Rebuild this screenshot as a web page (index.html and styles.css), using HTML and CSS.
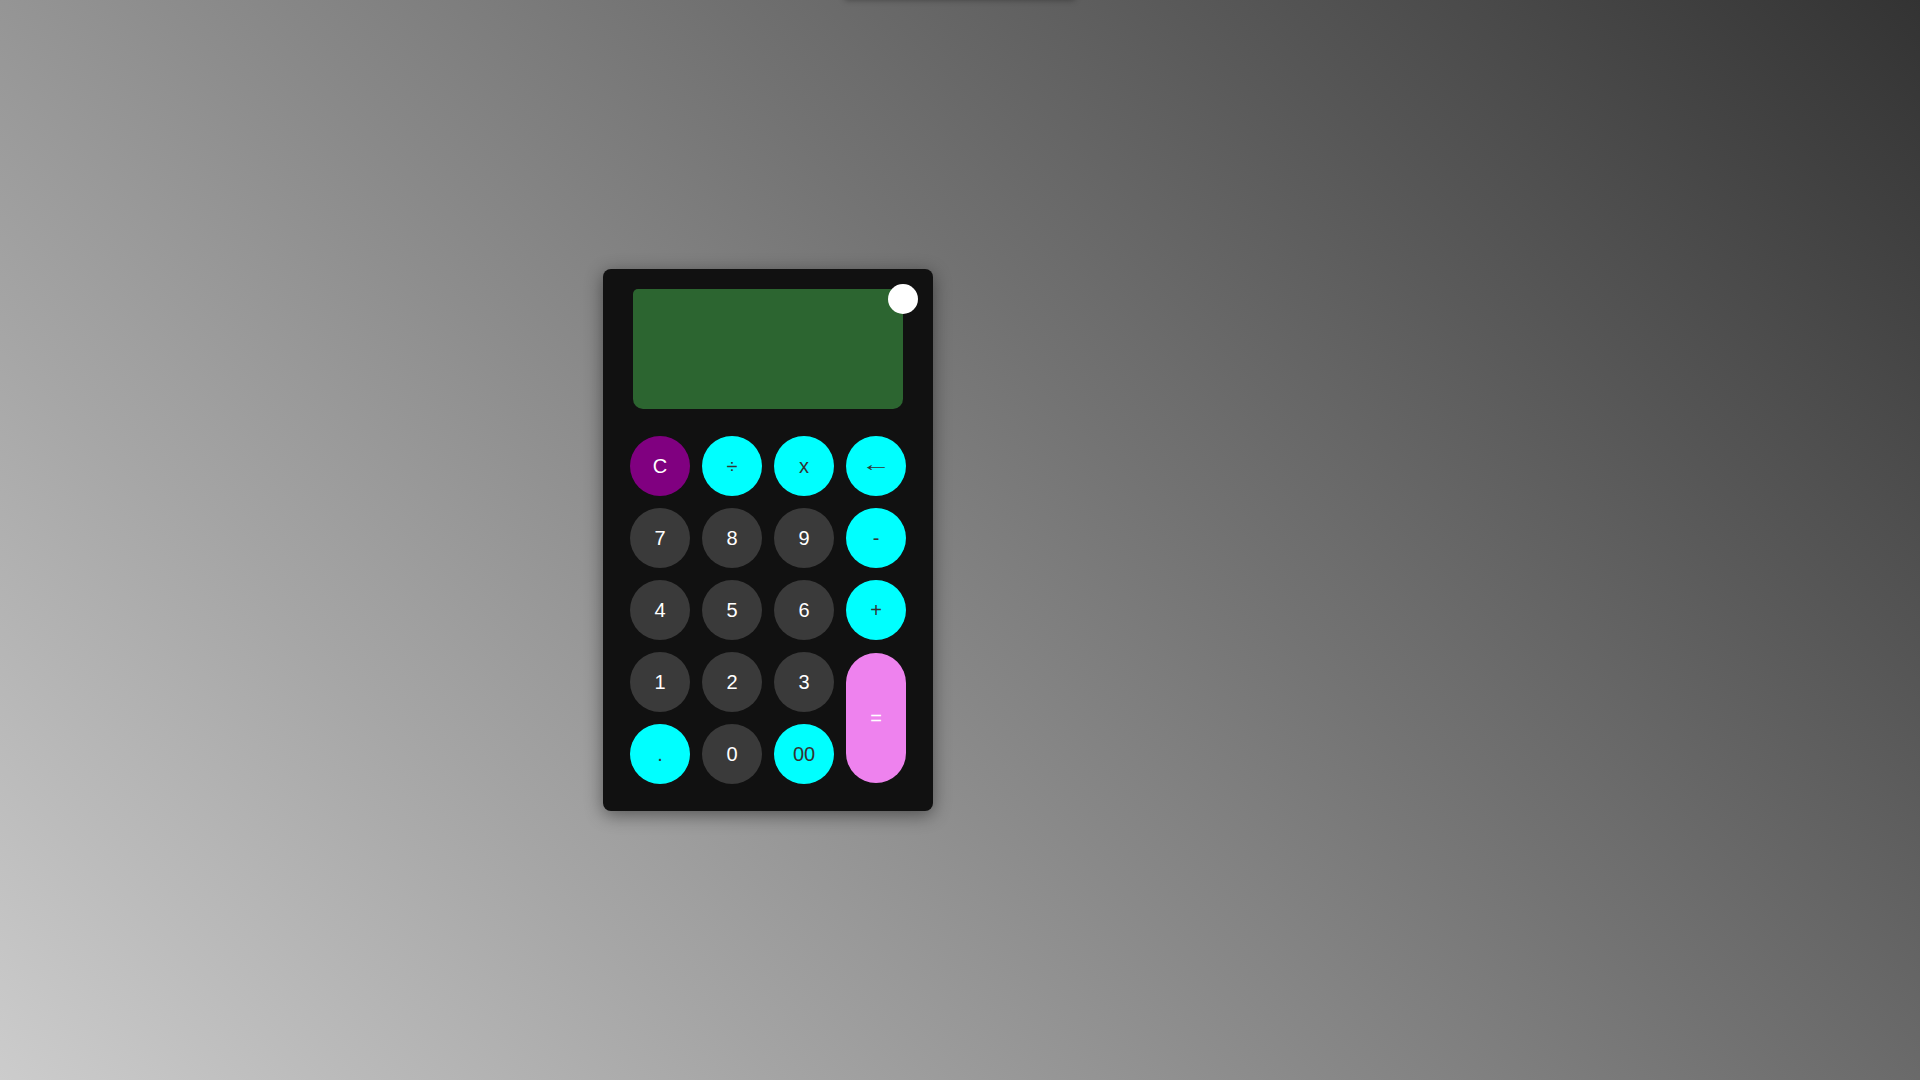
FILE: index.html
```html
<!DOCTYPE html>
<html lang="en">
<head>
<meta charset="UTF-8">
<title>Calculator</title>
<link rel="stylesheet" href="styles.css">
</head>
<body>
<div class="history-tab"></div>
<div class="calculator">
  <div class="display-wrap">
    <div class="display"></div>
    <span class="power"></span>
  </div>
  <div class="keys">
    <button class="key clear">C</button>
    <button class="key op">÷</button>
    <button class="key op">x</button>
    <button class="key op"><span class="arrow">←</span></button>
    <button class="key num">7</button>
    <button class="key num">8</button>
    <button class="key num">9</button>
    <button class="key op">-</button>
    <button class="key num">4</button>
    <button class="key num">5</button>
    <button class="key num">6</button>
    <button class="key op">+</button>
    <button class="key num">1</button>
    <button class="key num">2</button>
    <button class="key num">3</button>
    <button class="key equals">=</button>
    <button class="key op">.</button>
    <button class="key num">0</button>
    <button class="key op">00</button>
  </div>
</div>
</body>
</html>
```
FILE: styles.css
```css
* { box-sizing: border-box; }
html, body { margin: 0; height: 100%; }
body {
  min-height: 100vh;
  background: linear-gradient(45deg, #cccccc, #333333);
  display: flex;
  align-items: center;
  justify-content: center;
  font-family: "Liberation Sans", Arial, sans-serif;
  overflow: hidden;
  position: relative;
}
.history-tab {
  position: absolute;
  top: -40px;
  left: 50%;
  width: 230px;
  height: 40px;
  transform: translateX(-50%);
  box-shadow: 0 0 6px rgba(0,0,0,0.35);
}
.calculator {
  width: 330px;
  height: 542px;
  background: #111111;
  border-radius: 8px;
  padding: 20px 27px 27px;
  margin-right: 384px;
  box-shadow: 0 4px 18px rgba(0,0,0,0.45);
  display: flex;
  flex-direction: column;
}
.display-wrap {
  position: relative;
  margin: 0 3px 27px;
}
.display {
  height: 120px;
  background: #2c6530;
  border-radius: 5px 5px 10px 10px;
}
.power {
  position: absolute;
  top: -5px;
  right: -15px;
  width: 30px;
  height: 30px;
  border-radius: 50%;
  background: #ffffff;
}
.keys {
  display: grid;
  grid-template-columns: repeat(4, 60px);
  grid-auto-rows: 60px;
  gap: 12px;
}
.key {
  border: none;
  margin: 0;
  padding: 0;
  border-radius: 50%;
  font-family: "Liberation Sans", Arial, sans-serif;
  font-size: 20px;
  line-height: 1;
  display: flex;
  align-items: center;
  justify-content: center;
}
.arrow {
  display: inline-block;
  transform: scaleX(1.5);
  position: relative;
  top: -2px;
}
.num { background: #3a3a3a; color: #ffffff; }
.op { background: #00ffff; color: #333333; }
.clear { background: #800080; color: #ffffff; }
.equals {
  grid-row: span 2;
  height: 130px;
  align-self: center;
  border-radius: 30px;
  background: #ee82ee;
  color: #ffffff;
}
```
